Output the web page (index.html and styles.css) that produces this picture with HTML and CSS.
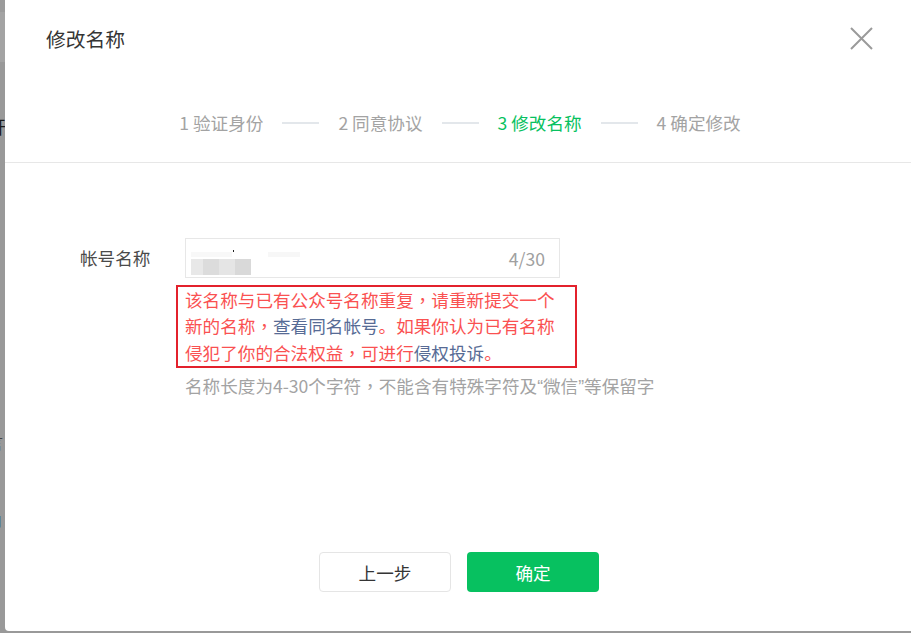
FILE: index.html
```html
<!DOCTYPE html>
<html lang="zh-CN">
<head>
<meta charset="utf-8">
<title>修改名称</title>
<link rel="stylesheet" href="styles.css">
</head>
<body>
<div class="page">
  <div class="page-top"></div>
  <div class="page-band"></div>
  <div class="page-frag frag-1">开</div>
  <div class="page-frag frag-2">言</div>
  <div class="page-frag frag-3">口</div>
</div>
<div class="dialog">
  <div class="dialog-head">
    <h3 class="dialog-title">修改名称</h3>
    <button class="close" aria-label="关闭">
      <svg width="23" height="23" viewBox="0 0 23 23"><path d="M1 1L22 22M22 1L1 22" stroke="#9a9a9a" stroke-width="2" fill="none"/></svg>
    </button>
  </div>
  <div class="steps">
    <span class="step">1 验证身份</span><span class="step-line"></span>
    <span class="step">2 同意协议</span><span class="step-line"></span>
    <span class="step current">3 修改名称</span><span class="step-line"></span>
    <span class="step">4 确定修改</span>
  </div>
  <div class="dialog-body">
    <div class="form-row">
      <label class="form-label">帐号名称</label>
      <div class="form-field">
        <div class="input">
          <div class="input-value">
            <span class="blur-top"><i class="b1"></i><i class="dot"></i><i class="b2"></i></span>
            <span class="blur-row"><i class="c1"></i><i class="c2"></i><i class="c3"></i><i class="c4"></i></span>
          </div>
          <span class="counter">4/30</span>
        </div>
        <div class="error">该名称与已有公众号名称重复<span class="punc" lang="zh-TW">，</span>请重新提交一个新的名称<span class="punc" lang="zh-TW">，</span><a class="link">查看同名帐号</a>。如果你认为已有名称侵犯了你的合法权益<span class="punc" lang="zh-TW">，</span>可进行<a class="link">侵权投诉</a>。</div>
        <p class="hint">名称长度为4-30个字符<span class="punc" lang="zh-TW">，</span>不能含有特殊字符及<span class="quote">“</span>微信<span class="quote">”</span>等保留字</p>
      </div>
    </div>
  </div>
  <div class="dialog-foot">
    <button class="btn btn-default">上一步</button>
    <button class="btn btn-primary">确定</button>
  </div>
</div>
</body>
</html>
```
FILE: styles.css
```css
* { box-sizing: border-box; }
html, body { margin: 0; padding: 0; }
body {
  width: 911px;
  height: 633px;
  overflow: hidden;
  background: #999999;
  position: relative;
  font-family: "Microsoft YaHei", "Noto Sans CJK SC", sans-serif;
}
.page { position: absolute; inset: 0; }
.page-top { height: 12px; background: #9b9b9b; }
.page-band { height: 50px; background: #a3a3a3; }
.page-frag {
  position: absolute;
  font-size: 18px;
  line-height: 18px;
  color: #1f1f1f;
}
.frag-1 { left: -12px; top: 117px; color: #1a1a1a; }
.frag-2 { left: -13px; top: 433px; color: #444; font-size: 16px; }
.frag-3 { left: -12px; top: 511px; color: #3d5f85; font-size: 14px; }

.dialog {
  position: absolute;
  left: 5px;
  top: 0;
  width: 907px;
  height: 631px;
  background: #fff;
  border-radius: 0 0 0 4px;
  display: flex;
  flex-direction: column;
}
.dialog-head {
  height: 77px;
  display: flex;
  align-items: center;
  justify-content: space-between;
  padding: 0 39px 0 41px;
}
.dialog-title {
  margin: 0;
  font-size: 19.8px;
  font-weight: normal;
  color: #353535;
  line-height: 24px;
}
.close {
  border: 0;
  background: none;
  padding: 0;
  width: 23px;
  height: 23px;
  display: block;
}
.close svg { display: block; }

.steps {
  display: flex;
  align-items: center;
  justify-content: center;
  gap: 19px;
  padding: 33px 0 26px 3px;
  border-bottom: 1px solid #e7e7e7;
}
.step {
  font-size: 17.6px;
  line-height: 26px;
  color: #a3a3a3;
  white-space: nowrap;
}
.step.current { color: #07c160; }
.step-line {
  width: 37px;
  height: 2px;
  background: #e3e7eb;
}

.dialog-body { padding: 75px 0 0 75px; }
.form-row { display: flex; align-items: flex-start; }
.form-label {
  width: 105px;
  font-size: 17.6px;
  line-height: 40px;
  color: #4a4a4a;
}
.form-field { width: 375px; }
.input {
  height: 40px;
  border: 1px solid #e7e7e7;
  display: flex;
  align-items: center;
  justify-content: space-between;
  padding: 0 12px 0 5px;
}
.input-value {
  display: flex;
  flex-direction: column;
  padding-top: 8px;
}
.blur-top { display: flex; height: 6px; align-items: flex-start; }
.blur-top i, .blur-row i { display: block; }
.blur-top .b1 { width: 41px; height: 5px; background: #f8f8f8; margin-top: 2px; }
.blur-top .dot { width: 1px; height: 2px; background: #222; margin-left: 1px; }
.blur-top .b2 { width: 32px; height: 5px; background: #f7f7f7; margin: 2px 0 0 34px; }
.blur-row { display: flex; height: 16px; margin-top: 3px; }
.blur-row .c1 { width: 12px; background: #e8e8e8; }
.blur-row .c2 { width: 16px; background: #dcdcdc; }
.blur-row .c3 { width: 16px; background: #e5e5e5; }
.blur-row .c4 { width: 16px; background: #d9d9d9; }
.counter {
  font-size: 17.6px;
  color: #a0a0a0;
  margin-right: 2px;
}

.punc {
  font-family: "Noto Sans CJK TC", "Noto Sans CJK SC", sans-serif;
  font-feature-settings: "locl" 0;
}
.quote { font-family: "Liberation Sans", sans-serif; }

.error {
  margin: 7px 0 0 -9px;
  width: 401px;
  border: 2px solid #e3212c;
  padding: 0 16px 0 7px;
  font-size: 17.6px;
  line-height: 26.4px;
  color: #fa5151;
}
.link { color: #576b95; text-decoration: none; }
.hint {
  margin: 5px 0 0;
  font-size: 17.6px;
  line-height: 26.4px;
  color: #a3a3a3;
  white-space: nowrap;
}

.dialog-foot {
  margin-top: auto;
  display: flex;
  justify-content: center;
  gap: 16px;
  padding: 0 0 39px 1px;
}
.btn {
  width: 132px;
  height: 40px;
  border-radius: 4px;
  font-size: 17.6px;
  font-family: "Microsoft YaHei", "Noto Sans CJK SC", sans-serif;
  padding: 0;
}
.btn-default {
  background: #fff;
  border: 1px solid #e5e5e5;
  color: #353535;
}
.btn-primary {
  background: #07c160;
  border: 0;
  color: #fff;
}
```
